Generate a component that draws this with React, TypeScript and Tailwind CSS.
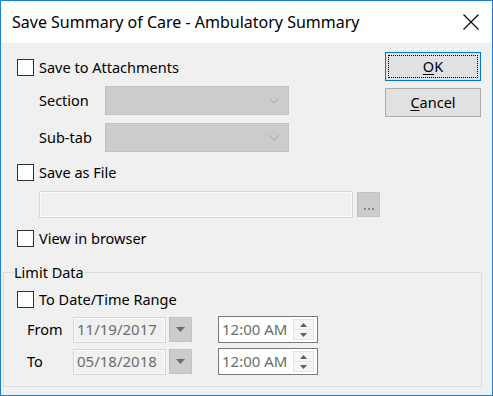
import React from "react";

function CheckBox({ label }: { label: string }) {
	return (
		<div className="flex h-[17px] items-center gap-[5px]">
			<div className="h-[17px] w-[17px] border border-[#333333] bg-white" />
			<span className="leading-none text-black">{label}</span>
		</div>
	);
}

function Chevron() {
	return (
		<svg width="12" height="7" viewBox="0 0 12 7" className="text-[#a6a6a6]">
			<path d="M1 1l5 5 5-5" fill="none" stroke="currentColor" strokeWidth="1" />
		</svg>
	);
}

function ComboRow({ label }: { label: string }) {
	return (
		<div className="flex items-center">
			<span className="w-[66px] text-black">{label}</span>
			<div className="flex h-[29px] w-[184px] items-center justify-end border border-[#c2c2c2] bg-[#cccccc] pr-[8px]">
				<Chevron />
			</div>
		</div>
	);
}

function DateRow({ label, date }: { label: string; date: string }) {
	return (
		<div className="flex items-center">
			<span className="w-[56px] pl-[10px] text-black">{label}</span>
			<div className="flex h-[26px] w-[93px] items-center whitespace-nowrap border border-[#d6d6d6] bg-[#f0f0f0] pl-[3px] text-[15px] leading-none text-[#6d6d6d] shadow-[inset_0_0_0_1px_#fafafa]">
				{date}
			</div>
			<div className="ml-[3px] flex h-[25px] w-[23px] items-center justify-center border border-[#c2c2c2] bg-[#cccccc]">
				<svg width="9" height="5" viewBox="0 0 9 5">
					<path d="M0 0h9L4.5 5z" fill="#6d6d6d" />
				</svg>
			</div>
			<div className="ml-[26px] flex h-[27px] w-[100px] items-center justify-between border border-[#7a7a7a] bg-white pl-[3px] pr-[3px] text-[15px] leading-none text-[#6d6d6d]">
				<span className="whitespace-nowrap">12:00 AM</span>
				<div className="flex h-[21px] w-[21px] shrink-0 flex-col border border-[#e3e3e3] bg-[#f5f5f5]">
					<div className="flex flex-1 items-center justify-center border-b border-[#e3e3e3]">
						<svg width="7" height="4" viewBox="0 0 7 4">
							<path d="M3.5 0L7 4H0z" fill="#606060" />
						</svg>
					</div>
					<div className="flex flex-1 items-center justify-center">
						<svg width="7" height="4" viewBox="0 0 7 4">
							<path d="M0 0h7L3.5 4z" fill="#606060" />
						</svg>
					</div>
				</div>
			</div>
		</div>
	);
}

export default function App() {
	return (
		<div className="flex h-[396px] w-[493px] flex-col border border-[#1883d7] bg-[#f0f0f0] font-['Noto_Sans',sans-serif] text-[14.5px]">
			<div className="flex h-[42px] shrink-0 items-center justify-between bg-white pl-[11px] pr-[13px]">
				<span className="text-[16px] text-black">Save Summary of Care - Ambulatory Summary</span>
				<svg width="16" height="16" viewBox="0 0 16 16">
					<path d="M0.5 0.5l15 15M15.5 0.5l-15 15" stroke="#000" strokeWidth="1.1" />
				</svg>
			</div>

			<div className="flex">
				<div className="flex flex-1 flex-col pl-[16px] pt-[16px]">
					<CheckBox label="Save to Attachments" />
					<div className="mt-[10px] flex flex-col gap-[8px] pl-[22px]">
						<ComboRow label="Section" />
						<ComboRow label="Sub-tab" />
					</div>
					<div className="mt-[12px]">
						<CheckBox label="Save as File" />
					</div>
					<div className="mt-[10px] flex items-center pl-[22px]">
						<div className="h-[27px] w-[314px] border border-[#d6d6d6] bg-[#f0f0f0] shadow-[inset_0_0_0_1px_#fafafa]" />
						<div className="ml-[4px] flex h-[25px] w-[23px] items-end justify-center border border-[#c2c2c2] bg-[#cccccc] pb-[6px]">
							<div className="flex gap-[2px]">
								<div className="h-[2px] w-[2px] bg-[#8a8a8a]" />
								<div className="h-[2px] w-[2px] bg-[#8a8a8a]" />
								<div className="h-[2px] w-[2px] bg-[#8a8a8a]" />
							</div>
						</div>
					</div>
					<div className="mt-[12px]">
						<CheckBox label="View in browser" />
					</div>
				</div>
				<div className="mr-[11px] flex w-[96px] flex-col gap-[7px] pt-[9px]">
					<div className="flex h-[29px] items-center justify-center border border-[#0078d7] bg-[#e1e1e1] p-[2px]">
						<div className="flex h-full w-full items-center justify-center border border-dotted border-black text-black">
							<span><span className="underline underline-offset-2">O</span>K</span>
						</div>
					</div>
					<div className="flex h-[29px] items-center justify-center border border-[#adadad] bg-[#e1e1e1] text-black">
						<span><span className="underline underline-offset-2">C</span>ancel</span>
					</div>
				</div>
			</div>

			<fieldset className="ml-[2px] mr-[10px] mt-[15px] border border-[#dcdcdc] px-0">
				<legend className="ml-[10px] leading-[20px] text-black">Limit Data</legend>
				<div className="flex flex-col pb-[11px] pl-[13px] pt-[9px]">
					<CheckBox label="To Date/Time Range" />
					<div className="mt-[8px] flex flex-col gap-[5px]">
						<DateRow label="From" date="11/19/2017" />
						<DateRow label="To" date="05/18/2018" />
					</div>
				</div>
			</fieldset>
		</div>
	);
}
